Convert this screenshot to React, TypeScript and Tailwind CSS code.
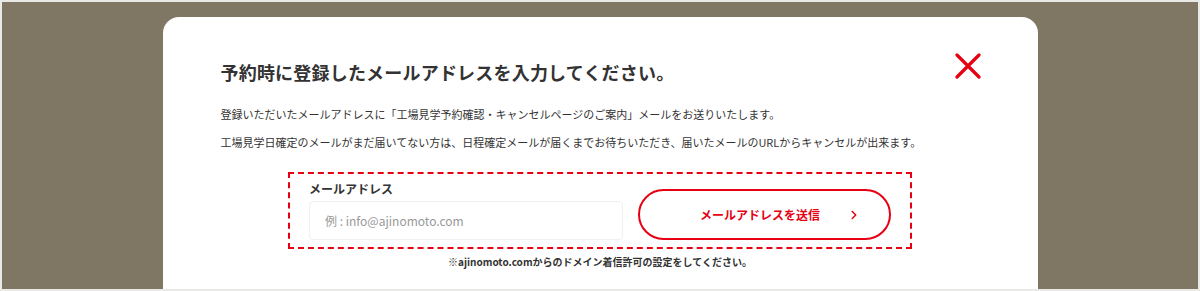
import { ChevronRight } from "lucide-react";

const font = {
  fontFamily: '"Noto Sans CJK JP", "Noto Sans", sans-serif',
};

function CloseIcon() {
  return (
    <svg width="26" height="26" viewBox="0 0 26 26" aria-hidden="true">
      <path
        d="M2 2 L24 24 M24 2 L2 24"
        stroke="#e60012"
        strokeWidth="3.2"
        strokeLinecap="round"
        fill="none"
      />
    </svg>
  );
}

export default function App() {
  return (
    <div
      className="w-full h-[291px] overflow-hidden border-2 border-[#e9e9e7] bg-[#7f7763] pt-[15px]"
      style={font}
    >
      <div className="mx-auto w-[875px] h-[300px] bg-white rounded-[16px] px-[58px] pt-[36px] text-[#333]">
        <div className="flex items-start justify-between">
          <h2 className="mt-[5px] text-[18px] leading-[28px] font-bold tracking-[0.2px] text-[#333]">
            予約時に登録したメールアドレスを入力してください。
          </h2>
          <button className="mr-[-1px] p-0">
            <CloseIcon />
          </button>
        </div>

        <p className="mt-[20px] text-[11px] leading-[16px] text-[#333]">
          登録いただいたメールアドレスに「工場見学予約確認・キャンセルページのご案内」メールをお送りいたします。
        </p>
        <p className="mt-[12px] text-[11px] leading-[16px] text-[#333]">
          工場見学日確定のメールがまだ届いてない方は、日程確定メールが届くまでお待ちいただき、届いたメールのURLからキャンセルが出来ます。
        </p>

        <div className="mx-auto mt-[22px] w-[624px] border-2 border-dashed border-[#e60012] px-[19px] pt-[6px] pb-[7px]">
          <div className="flex items-end gap-[15px]">
            <div className="flex flex-col">
              <label className="text-[12px] leading-[18px] font-bold text-[#333]">
                メールアドレス
              </label>
              <input
                type="text"
                placeholder="例 : info@ajinomoto.com"
                className="mt-[3px] w-[314px] h-[39px] rounded-[4px] border border-[#f0f0f0] px-[15px] text-[12px] text-[#333] placeholder:text-[#999] outline-none"
              />
            </div>
            <button className="relative flex h-[51px] w-[255px] items-center justify-center rounded-full border-2 border-[#e60012] bg-white">
              <span className="mr-[9px] text-[12px] font-bold text-[#e60012]">
                メールアドレスを送信
              </span>
              <ChevronRight
                size={14}
                strokeWidth={2.5}
                className="absolute right-[28px] text-[#e60012]"
              />
            </button>
          </div>
        </div>

        <p className="mt-[5px] text-center text-[10px] leading-[16px] font-bold text-[#333]">
          ※ajinomoto.comからのドメイン着信許可の設定をしてください。
        </p>
      </div>
    </div>
  );
}
